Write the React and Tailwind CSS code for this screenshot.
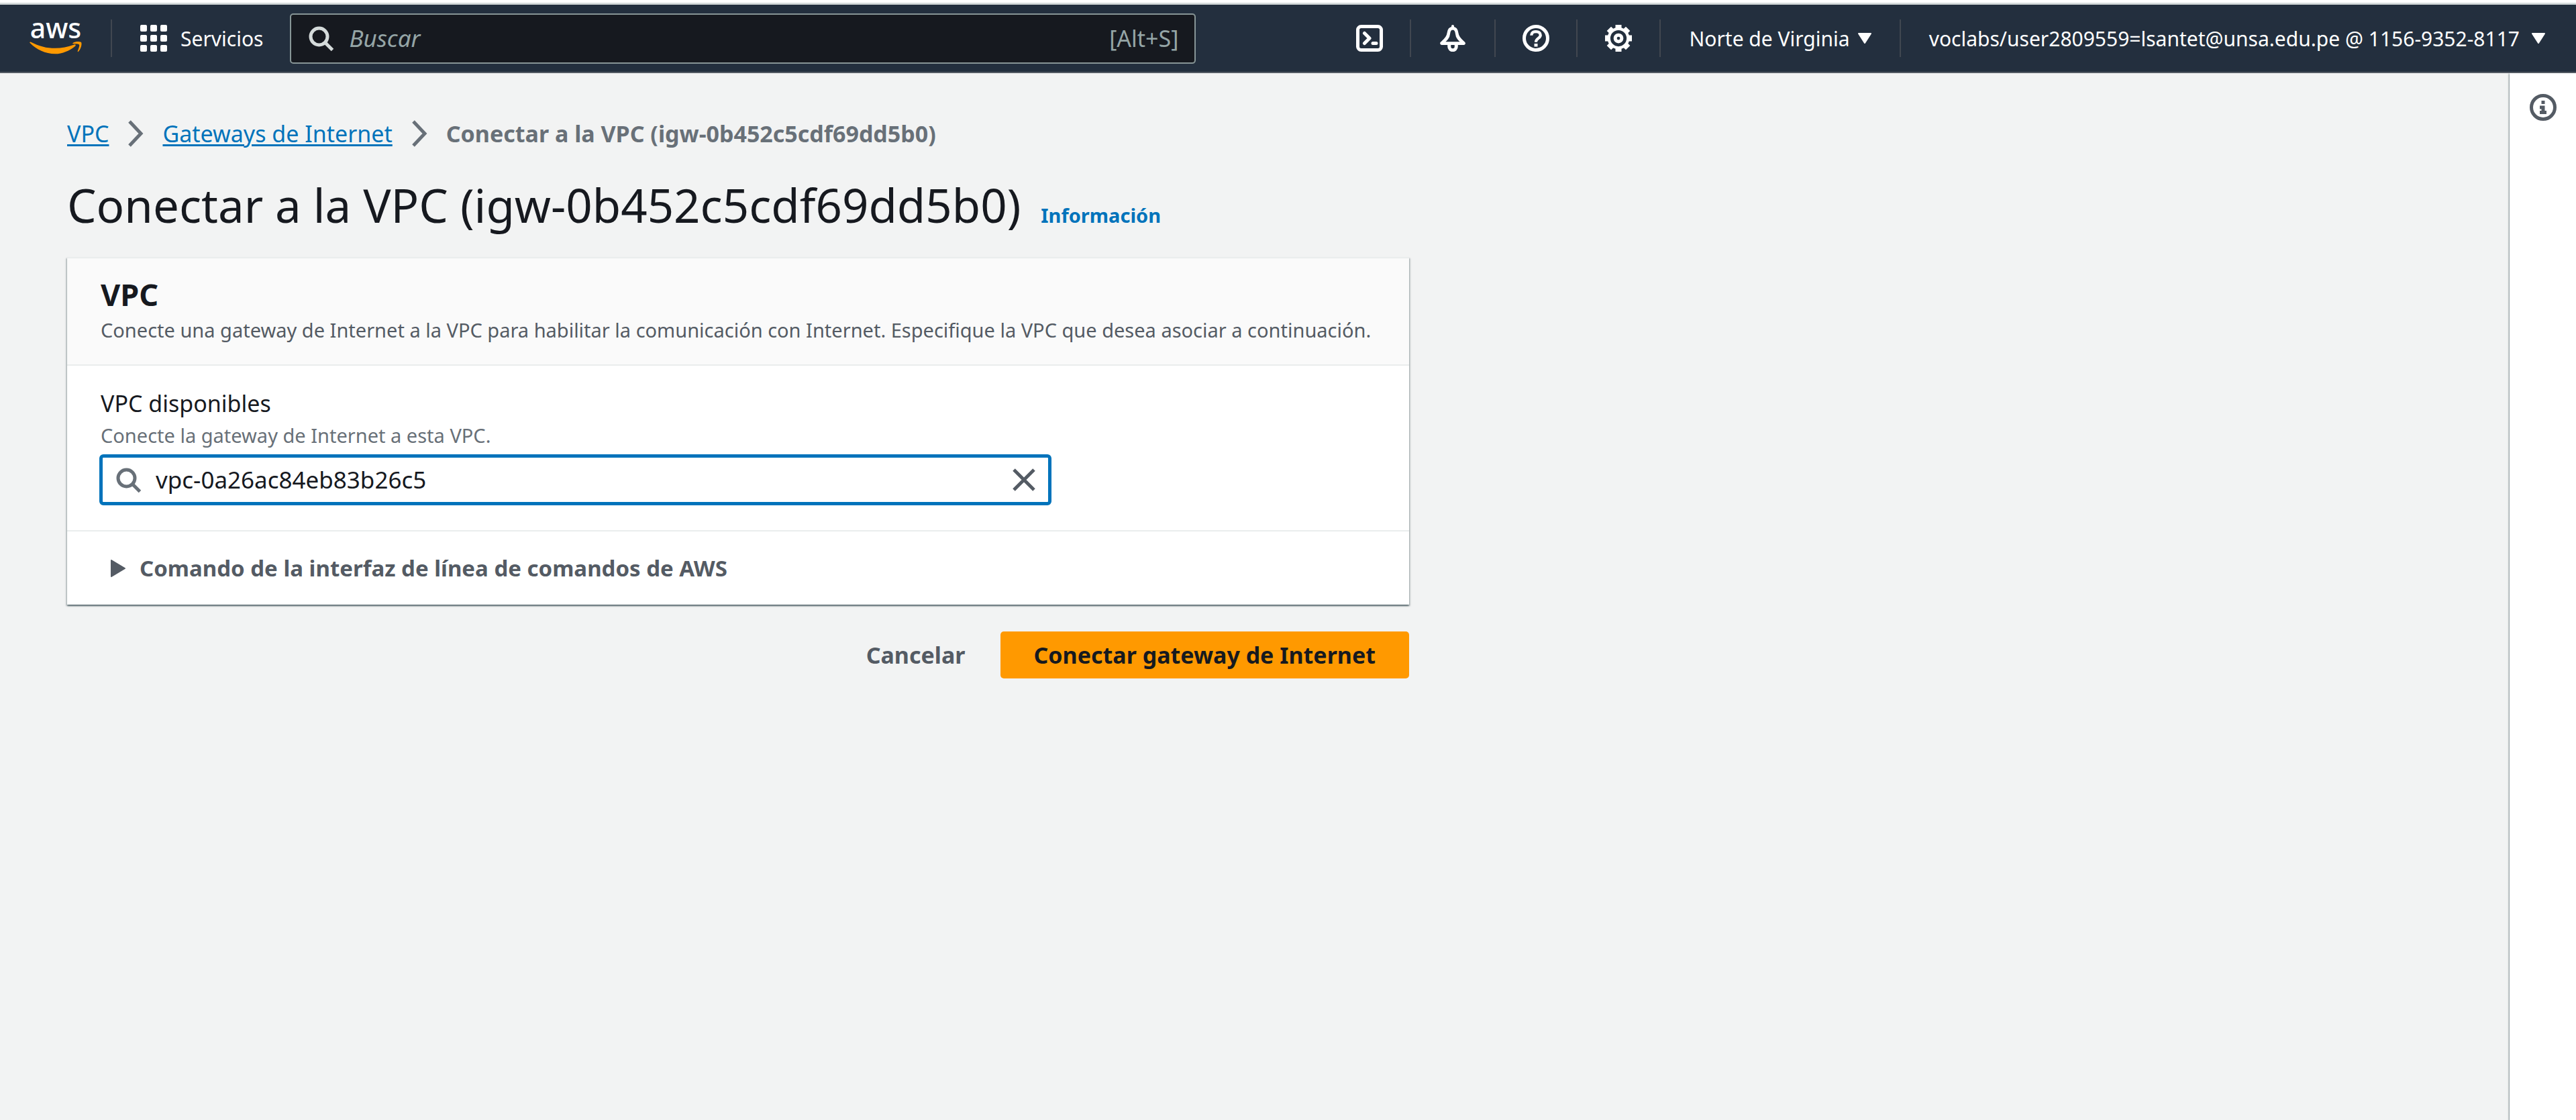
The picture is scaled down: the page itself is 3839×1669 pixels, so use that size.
import React, { useState } from "react";

function SearchIcon({ className }) {
  return (
    <svg viewBox="0 0 16 16" fill="none" stroke="currentColor" strokeWidth="2" className={className} aria-hidden="true">
      <circle cx="7" cy="7" r="5" />
      <path d="M15 15l-4.5-4.5" />
    </svg>
  );
}

function AwsLogo() {
  return (
    <a href="#inicio" aria-label="aws" className="block shrink-0">
      <svg viewBox="0 -16 80 94" className="h-[94px] w-[80px]" aria-hidden="true">
        <text x="39" y="31" textAnchor="middle" fontFamily="'Noto Sans', sans-serif" fontSize="41" fontWeight="500" fill="#fff">
          aws
        </text>
        <g fill="#f90" transform="translate(0 9) scale(.98 .94)">
          <path d="M1 31.200c-1.300-.7-.5-2.500 1.200-1.800C14 35.800 26 39.200 39 39.200c9.500 0 19.500-2 29-5.800 1.800-.7 3 1.200 1.500 2.400C61 43 50 48.200 39 48.200 24 48.200 10.500 41.500 1 31.200z" />
          <path d="M66 30.800c4-2.800 10.500-2 12.300-1.200 1.900 1.300.4 10.500-3.900 14.900-.8.700-1.500.3-1.200-.6 1.100-2.700 3.300-8.900 2.300-10.300-1-1.300-6-1.200-8.600-1.300-1.300 0-1.800-.8-.9-1.500z" />
        </g>
      </svg>
    </a>
  );
}

function GridIcon() {
  return (
    <svg viewBox="0 0 16 16" fill="currentColor" className="size-[40px]" aria-hidden="true">
      {[0, 6, 12].map((y) =>
        [0, 6, 12].map((x) => <rect key={`${x}-${y}`} x={x} y={y} width="4" height="4" rx=".8" />)
      )}
    </svg>
  );
}

function TerminalIcon() {
  return (
    <svg viewBox="0 0 16 16" fill="none" stroke="currentColor" strokeWidth="2" className="size-[40px]" aria-hidden="true">
      <rect x="1" y="1" width="14" height="14" rx="2" />
      <path d="M5 5l3 3-3 3M10 11h2" strokeLinecap="round" strokeLinejoin="round" />
    </svg>
  );
}

function BellIcon() {
  return (
    <svg viewBox="0 0 16 16" fill="none" stroke="currentColor" className="size-[40px]" aria-hidden="true">
      <path d="M8 .8v1.400" strokeWidth="1.600" strokeLinecap="round" />
      <path d="M1.400 11C3.300 9.200 5.300 7.800 5.500 5.200 5.700 3.200 6.500 2 8 2s2.300 1.200 2.500 3.200c.2 2.600 2.200 4 4.100 5.800z" strokeWidth="1.900" strokeLinejoin="round" />
      <path d="M5.900 11.500V13a2.100 2.100 0 0 0 4.200 0v-1.500" strokeWidth="2" />
    </svg>
  );
}

function HelpIcon() {
  return (
    <svg viewBox="0 0 16 16" fill="none" stroke="currentColor" className="size-[40px]" aria-hidden="true">
      <circle cx="8" cy="8" r="7" strokeWidth="2" />
      <path d="M5.300 6.300C5.300 4.800 6.400 4 8 4s2.700.8 2.700 2.200C10.700 8 8 8 8 10.300" strokeWidth="1.700" />
      <path d="M7 12.100h2" strokeWidth="1.800" />
    </svg>
  );
}

function GearIcon() {
  return (
    <svg viewBox="0 0 16 16" fill="none" stroke="currentColor" className="size-[40px]" aria-hidden="true">
      <circle cx="8" cy="8" r="5.700" strokeWidth="1.700" />
      <path
        d="M8 0v2.500M8 13.500V16M0 8h2.500M13.500 8H16M2.340 2.340l1.770 1.770M11.890 11.890l1.770 1.770M2.340 13.660l1.770-1.770M11.890 4.110l1.770-1.770"
        strokeWidth="3.600"
      />
      <circle cx="8" cy="8" r="1.950" strokeWidth="2" />
    </svg>
  );
}

function InfoIcon() {
  return (
    <svg viewBox="0 0 16 16" fill="none" stroke="currentColor" strokeWidth="2" className="size-[40px]" aria-hidden="true">
      <circle cx="8" cy="8" r="7" />
      <path d="M7 4v2h2V4z" fill="currentColor" stroke="none" />
      <path d="M6 8h2v3M6 11h4" />
    </svg>
  );
}

function CaretDown() {
  return (
    <svg viewBox="0 0 20 16" fill="currentColor" stroke="currentColor" strokeWidth="2" strokeLinejoin="round" className="h-[16px] w-[20px]" aria-hidden="true">
      <path d="M1 1h18l-9 14z" />
    </svg>
  );
}

function CrumbChevron() {
  return (
    <svg viewBox="0 0 24 40" fill="none" stroke="#687078" strokeWidth="5" className="h-[40px] w-[24px]" aria-hidden="true">
      <path d="M3 2l17 18L3 38" />
    </svg>
  );
}

function Divider() {
  return <span className="h-[56px] w-[2px] shrink-0 bg-[#414750]" />;
}

function TopBar() {
  return (
    <header className="flex h-[105px] items-center border-t-3 border-b-2 border-t-[#d5dbdb] border-b-[#545b64] bg-[#232f3e] pr-[46px] pl-[44px] text-[30px] text-white">
      <AwsLogo />
      <div className="flex items-center pl-[41px]">
        <Divider />
        <button type="button" className="mr-[40px] ml-[42px] flex items-center gap-[20px]">
          <GridIcon />
          <span>Servicios</span>
        </button>
      </div>
      <div role="search" className="flex h-[75px] w-[1350px] min-w-0 shrink items-center rounded-[5px] border-2 border-[#879596] bg-[#16191f] px-[24px]">
        <SearchIcon className="size-[40px] shrink-0 text-[#d5dbdb]" />
        <input
          type="text"
          aria-label="Buscar"
          placeholder="Buscar"
          className="ml-[22px] min-w-0 flex-1 bg-transparent text-[35px] leading-[50px] outline-none placeholder:text-[#95a5a6] placeholder:italic"
        />
        <span className="text-[34px] text-[#95a5a6]">[Alt+S]</span>
      </div>
      <div className="ml-auto flex shrink-0 items-center">
        <button type="button" aria-label="CloudShell" className="px-[40px]"><TerminalIcon /></button>
        <Divider />
        <button type="button" aria-label="Notificaciones" className="px-[42px]"><BellIcon /></button>
        <Divider />
        <button type="button" aria-label="Ayuda" className="px-[40px]"><HelpIcon /></button>
        <Divider />
        <button type="button" aria-label="Configuración" className="px-[41px]"><GearIcon /></button>
        <Divider />
        <button type="button" className="flex items-center gap-[12px] px-[42px]">
          Norte de Virginia
          <CaretDown />
        </button>
        <Divider />
        <button type="button" className="flex items-center gap-[18px] pl-[42px]">
          voclabs/user2809559=lsantet@unsa.edu.pe @ 1156-9352-8117
          <CaretDown />
        </button>
      </div>
    </header>
  );
}

function Breadcrumbs() {
  return (
    <nav aria-label="Ruta" className="text-[34px] leading-[56px]">
      <ol className="flex items-center gap-[28px]">
        <li><a href="#vpc" className="text-[#0073bb] underline decoration-3 underline-offset-3">VPC</a></li>
        <li aria-hidden="true"><CrumbChevron /></li>
        <li><a href="#gateways" className="text-[#0073bb] underline decoration-3 underline-offset-3">Gateways de Internet</a></li>
        <li aria-hidden="true"><CrumbChevron /></li>
        <li className="font-bold text-[#687078]">Conectar a la VPC (igw-0b452c5cdf69dd5b0)</li>
      </ol>
    </nav>
  );
}

function VpcCard() {
  const [vpc, setVpc] = useState("vpc-0a26ac84eb83b26c5");
  return (
    <section className="mt-[33px] border-t-2 border-[#eaeded] bg-white shadow-[0_2px_2px_0_rgba(0,28,36,0.5),2px_2px_2px_0_rgba(0,28,36,0.15),-2px_2px_2px_0_rgba(0,28,36,0.15)]">
      <div className="border-b-2 border-[#eaeded] bg-[#fafafa] pt-[26px] pr-[40px] pb-[31px] pl-[50px]">
        <h2 className="text-[45px] leading-[55px] font-bold">VPC</h2>
        <p className="mt-[6px] text-[29px] leading-[40px] text-[#545b64]">
          Conecte una gateway de Internet a la VPC para habilitar la comunicación con Internet. Especifique la VPC que desea asociar a continuación.
        </p>
      </div>
      <div className="px-[48px] pt-[31px] pb-[37px]">
        <label htmlFor="vpc" className="block px-[2px] text-[34px] leading-[50px]">VPC disponibles</label>
        <p id="vpc-hint" className="mt-[3px] px-[2px] text-[29px] leading-[40px] text-[#687078]">Conecte la gateway de Internet a esta VPC.</p>
        <div className="mt-[8px] flex h-[76px] w-full max-w-[1419px] items-center rounded-[6px] border-5 border-[#0073bb] px-[18px]">
          <SearchIcon className="size-[40px] text-[#687078]" />
          <input
            id="vpc"
            aria-describedby="vpc-hint"
            value={vpc}
            onChange={(e) => setVpc(e.target.value)}
            className="ml-[21px] min-w-0 flex-1 text-[35px] leading-[50px] outline-none"
          />
          <button type="button" aria-label="Borrar" onClick={() => setVpc("")} className="text-[#545b64]">
            <svg viewBox="0 0 36 36" fill="none" stroke="currentColor" strokeWidth="5" className="size-[36px]" aria-hidden="true">
              <path d="M3 3l30 30M33 3L3 33" />
            </svg>
          </button>
        </div>
      </div>
      <div className="flex h-[111px] items-center border-t-2 border-[#eaeded] px-[65px]">
        <button type="button" aria-expanded="false" className="flex items-center gap-[21px] text-[33px] leading-[50px] font-bold text-[#545b64]">
          <svg viewBox="0 0 22 26" fill="currentColor" stroke="currentColor" strokeWidth="2" strokeLinejoin="round" className="h-[26px] w-[22px]" aria-hidden="true">
            <path d="M1 1v24l20-12z" />
          </svg>
          Comando de la interfaz de línea de comandos de AWS
        </button>
      </div>
    </section>
  );
}

export default function App() {
  return (
    <div className="flex min-h-screen flex-col bg-white pt-[4px] font-['Noto_Sans',sans-serif] text-[#16191f]">
      <TopBar />
      <div className="flex flex-1 bg-[#f2f3f3]">
        <main className="min-w-0 flex-1 px-[100px] pt-[62px]">
          <Breadcrumbs />
          <div className="mt-[33px] flex items-baseline gap-[30px]">
            <h1 className="text-[69px] leading-[90px]">Conectar a la VPC (igw-0b452c5cdf69dd5b0)</h1>
            <a href="#informacion" className="text-[29px] font-bold text-[#0073bb]">Información</a>
          </div>
          <div className="w-full max-w-[2000px]">
            <VpcCard />
            <div className="mt-[40px] flex justify-end text-[34px] leading-[50px] font-bold">
              <button type="button" className="px-[52px] text-[#545b64]">Cancelar</button>
              <button type="button" className="h-[70px] rounded-[5px] bg-[#f90] px-[50px]">Conectar gateway de Internet</button>
            </div>
          </div>
        </main>
        <aside className="w-[99px] shrink-0 bg-white pt-[31px] pl-[30px] text-[#545b64] shadow-[-1px_1px_2px_0_rgba(0,28,36,0.5)]">
          <button type="button" aria-label="Información" className="block"><InfoIcon /></button>
        </aside>
      </div>
    </div>
  );
}
